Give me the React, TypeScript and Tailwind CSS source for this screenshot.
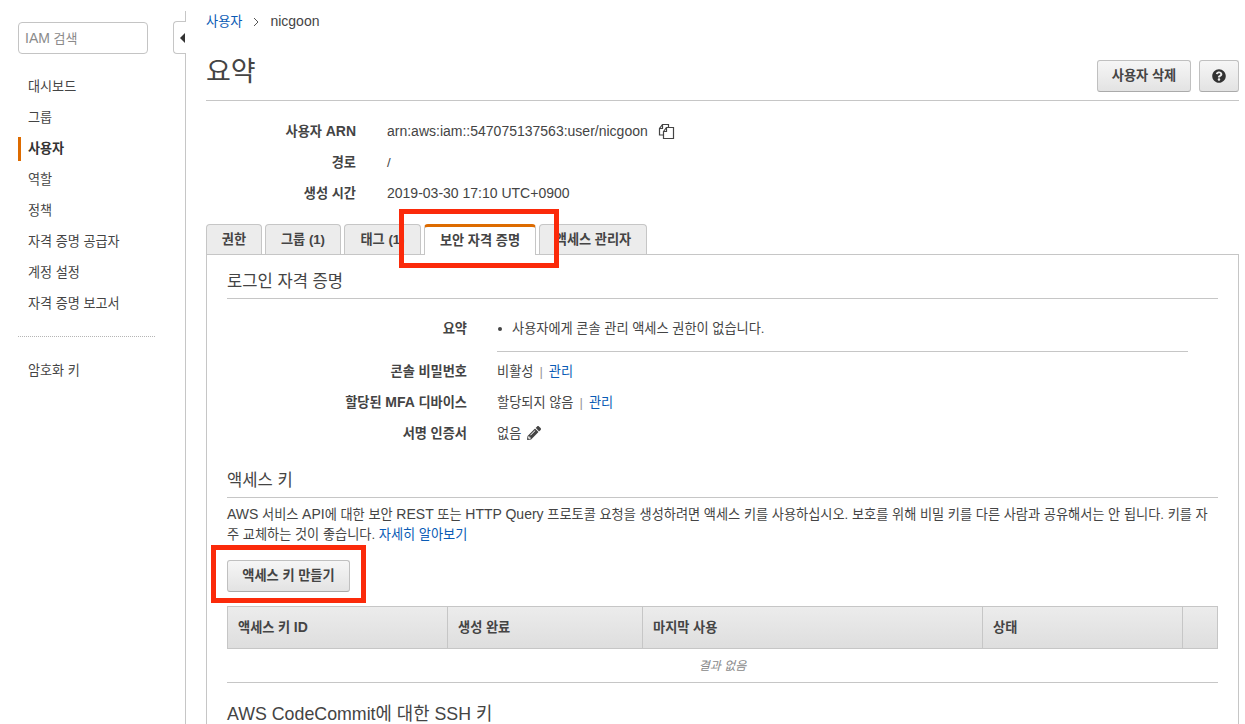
import { FaPencilAlt, FaQuestionCircle } from "react-icons/fa";

const NAV = ["대시보드", "그룹", "사용자", "역할", "정책", "자격 증명 공급자", "계정 설정", "자격 증명 보고서"];

const TABS = [
  { label: "권한", w: "w-[56px]" },
  { label: "그룹 (1)", w: "w-[76px]" },
  { label: "태그 (1)", w: "w-[77px]" },
  { label: "보안 자격 증명", w: "w-[112px]", active: true },
  { label: "액세스 관리자", w: "w-[108px]" },
];

// latin runs are a bit larger than the hangul next to them
const En = ({ children }: { children: React.ReactNode }) => <span className="text-[14px]">{children}</span>;

const Sidebar = () => {
  return (
    <aside className="relative w-[186px] shrink-0 h-[713px] mt-[11px] pt-[11px] pl-[18px] border-r border-[#c6c6c6]">
      <div className="w-[130px] h-[32px] border border-[#c4c4c4] rounded-[4px] px-[6px] flex items-center text-[13px] text-[#8a8a8a]">
        <span>
          <En>IAM</En> 검색
        </span>
      </div>
      <div className="absolute left-[173px] top-[10px] w-[13px] h-[33px] bg-white border border-r-0 border-[#c6c6c6] rounded-l-[4px] flex items-center justify-end pr-[1px]">
        <div className="w-0 h-0 border-y-[5px] border-y-transparent border-r-[5px] border-r-[#333]" />
      </div>
      <nav className="mt-[17px] flex flex-col text-[13.1px] text-[#444]">
        {NAV.map((n) => (
          <div
            key={n}
            className={
              n === "사용자"
                ? "h-[31px] flex items-center"
                : "h-[31px] flex items-center pl-[10px]"
            }
          >
            {n === "사용자" ? (
              <div className="h-[24px] border-l-[3px] border-[#dd6b00] pl-[7px] flex items-center font-bold text-[#333]">
                {n}
              </div>
            ) : (
              n
            )}
          </div>
        ))}
      </nav>
      <div className="mt-[17px] w-[137px] border-t border-dotted border-[#b5b5b5]" />
      <div className="mt-[18px] pl-[10px] h-[31px] flex items-center text-[13.1px] text-[#444]">암호화 키</div>
    </aside>
  );
};

const Button = ({ children, className }: { children: React.ReactNode; className: string }) => {
  return (
    <button
      className={`h-[32px] flex items-center justify-center rounded-[3px] border border-[#c0c0c0] border-b-[#aaaaaa] bg-gradient-to-b from-[#f6f6f6] to-[#e3e3e3] text-[13.2px] font-bold text-[#444] ${className}`}
    >
      {children}
    </button>
  );
};

const InfoRow = ({ label, children }: { label: React.ReactNode; children: React.ReactNode }) => {
  return (
    <div className="h-[31px] flex items-center text-[13.2px] text-[#444]">
      <div className="w-[150px] text-right font-bold">{label}</div>
      <div className="ml-[31px] flex items-center">{children}</div>
    </div>
  );
};

const SecRow = ({ label, children }: { label: React.ReactNode; children: React.ReactNode }) => {
  return (
    <div className="h-[31px] flex items-center text-[13.2px] text-[#444]">
      <div className="w-[240px] text-right font-bold">{label}</div>
      <div className="ml-[30px] flex items-center">{children}</div>
    </div>
  );
};

const Th = ({ label, className }: { label?: React.ReactNode; className: string }) => {
  return (
    <div className={`h-full flex items-center pl-[10px] border-r border-[#c6c6c6] last:border-r-0 ${className}`}>
      <span>{label}</span>
    </div>
  );
};

export default function App() {
  return (
    <div className="relative w-[1245px] h-[724px] overflow-hidden bg-white flex font-['Liberation_Sans','Noto_Sans_CJK_KR',sans-serif]">
      <Sidebar />
      <main className="flex-1 pl-[20px] pr-[6px] min-w-0">
        <div className="h-[42px] pt-[1px] flex items-center text-[13.2px] text-[#444]">
          <a className="text-[#0a5bb5]">사용자</a>
          <svg className="mx-[10px] w-[8px] h-[10px]" viewBox="0 0 8 10" fill="none" stroke="#555" strokeWidth="1">
            <path d="M2 1l4 4-4 4" />
          </svg>
          <En>nicgoon</En>
        </div>
        <div className="h-[59px] flex items-start justify-between border-b border-[#c6c6c6]">
          <h1 className="text-[27px] leading-[56px] pt-[2px] text-[#444]">요약</h1>
          <div className="flex gap-[8px] mt-[18px]">
            <Button className="w-[94px]">사용자 삭제</Button>
            <Button className="w-[40px]">
              <FaQuestionCircle className="text-[14px] text-[#333]" />
            </Button>
          </div>
        </div>
        <div className="mt-[15px]">
          <InfoRow label={<>사용자 <En>ARN</En></>}>
            <En>arn:aws:iam::547075137563:user/nicgoon</En>
            <svg className="ml-[10px] w-[17px] h-[17px]" viewBox="0 0 17 17" fill="none" stroke="#444" strokeWidth="1.2">
              <path d="M5.5 12H1.5V5.5L4.5 1.5H10.5V4.5" />
              <path d="M5.5 8.5L8.5 4.5H15.5V15.5H5.5Z" />
              <path d="M5.5 8.5H8.5V4.5" />
              <path d="M1.5 5.5H4.5V1.5" />
            </svg>
          </InfoRow>
          <InfoRow label="경로">/</InfoRow>
          <InfoRow label="생성 시간"><En>2019-03-30 17:10 UTC+0900</En></InfoRow>
        </div>
        <div className="mt-[14px] flex items-end h-[31px] gap-[3px]">
          {TABS.map((t) => (
            <div
              key={t.label}
              className={
                t.active
                  ? `${t.w} h-[31px] relative z-10 -mb-px flex items-center justify-center bg-white border-x border-[#c6c6c6] border-t-[3px] border-t-[#dd6b00] rounded-t-[4px] text-[13.2px] font-bold text-[#444]`
                  : `${t.w} h-[30px] flex items-center justify-center bg-[#ececec] border border-b-0 border-[#c6c6c6] rounded-t-[4px] text-[13.2px] font-bold text-[#444]`
              }
            >
              {t.label}
            </div>
          ))}
        </div>
        <section className="border border-b-0 border-[#c6c6c6] px-[20px] h-[470px]">
          <h2 className="h-[44px] flex items-center pt-[11px] text-[16.6px] text-[#444] border-b border-[#c6c6c6]">
            로그인 자격 증명
          </h2>
          <div className="flex items-start h-[53px] text-[13.2px] text-[#444]">
            <div className="w-[240px] pt-[20px] text-right font-bold">요약</div>
            <div className="ml-[30px] w-[691px] h-full pt-[20px] border-b border-[#c6c6c6] flex items-start">
              <span className="w-[15px] pt-[8px]">
                <div className="w-[4px] h-[4px] ml-[1px] rounded-full bg-[#444]" />
              </span>
              <span>사용자에게 콘솔 관리 액세스 권한이 없습니다.</span>
            </div>
          </div>
          <div className="mt-[4px]">
            <SecRow label="콘솔 비밀번호">
              비활성<span className="mx-[6px] text-[#999]">|</span>
              <a className="text-[#0a5bb5]">관리</a>
            </SecRow>
            <SecRow label={<>할당된 <En>MFA</En> 디바이스</>}>
              할당되지 않음<span className="mx-[6px] text-[#999]">|</span>
              <a className="text-[#0a5bb5]">관리</a>
            </SecRow>
            <SecRow label="서명 인증서">
              없음
              <FaPencilAlt className="ml-[6px] text-[14px] text-[#444]" />
            </SecRow>
          </div>
          <h2 className="mt-[16px] h-[33px] flex items-center text-[16.6px] text-[#444] border-b border-[#c6c6c6]">
            액세스 키
          </h2>
          <p className="mt-[6px] text-[13.2px] leading-[20px] text-[#444]">
            <En>AWS</En> 서비스 <En>API</En>에 대한 보안 <En>REST</En> 또는 <En>HTTP Query</En> 프로토콜 요청을 생성하려면 액세스 키를 사용하십시오. 보호를 위해 비밀 키를 다른 사람과 공유해서는 안 됩니다. 키를 자주 교체하는 것이 좋습니다.{" "}
            <a className="text-[#0a5bb5]">자세히 알아보기</a>
          </p>
          <Button className="mt-[15px] w-[123px]">액세스 키 만들기</Button>
          <div className="mt-[14px] h-[43px] flex border border-[#c6c6c6] bg-gradient-to-b from-[#ececec] to-[#dedede] text-[13.2px] font-bold text-[#444]">
            <Th label={<>액세스 키 <En>ID</En></>} className="w-[220px]" />
            <Th label="생성 완료" className="w-[195px]" />
            <Th label="마지막 사용" className="w-[340px]" />
            <Th label="상태" className="w-[200px]" />
            <Th className="flex-1" />
          </div>
          <div className="h-[34px] flex items-center justify-center border-b border-[#c6c6c6] text-[12px] italic text-[#888]">
            결과 없음
          </div>
          <h2 className="mt-[18px] text-[17.8px] leading-[27px] text-[#444]">AWS CodeCommit에 대한 SSH 키</h2>
        </section>
      </main>
      <div className="absolute left-[399px] top-[209px] w-[160px] h-[59px] border-[5px] border-[#fb2a0a] pointer-events-none z-20" />
      <div className="absolute left-[211px] top-[545px] w-[155px] h-[58px] border-[5px] border-[#fb2a0a] pointer-events-none z-20" />
    </div>
  );
}
